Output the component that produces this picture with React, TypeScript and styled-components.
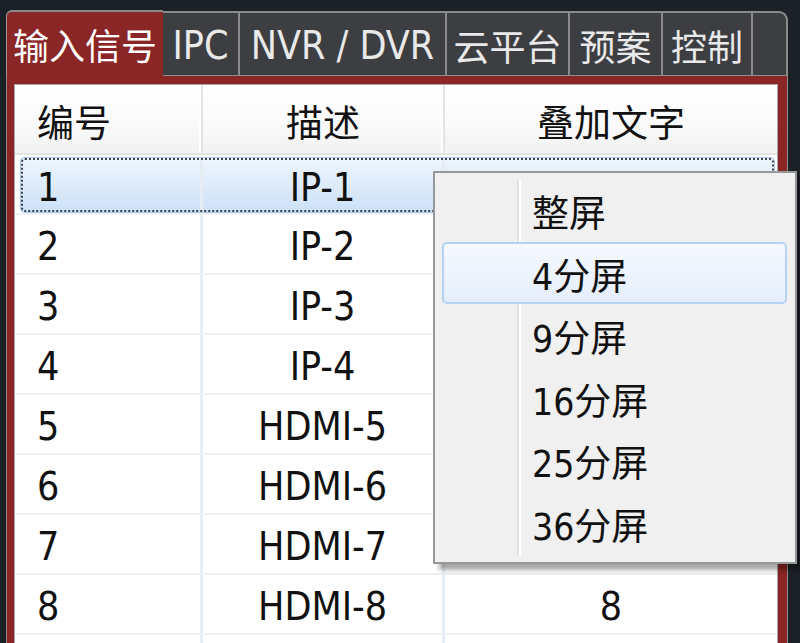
import * as React from 'react';
import styled, { createGlobalStyle, css } from 'styled-components';

const GlobalStyle = createGlobalStyle`
  html, body {
    margin: 0;
    padding: 0;
    background: #1c2128;
    overflow: hidden;
  }
`;

const latin = `"DejaVu Sans Condensed", "DejaVu Sans", "Noto Sans CJK SC", sans-serif`;

const Screen = styled.div`
  position: relative;
  width: 800px;
  height: 643px;
  overflow: hidden;
  box-sizing: border-box;
  padding: 10px 0 0 6px;
  background: #1c2128;
  font-family: ${latin};
  font-stretch: condensed;
  font-size: 37px;
  color: #111;
`;

const TabBar = styled.div`
  display: flex;
  align-items: flex-end;
  width: 782px;
  height: 65px;
`;

const Tab = styled.div<{ $active?: boolean; $width: number; $last?: boolean; $latin?: boolean }>`
  width: ${(p) => p.$width}px;
  height: 64px;
  box-sizing: border-box;
  display: flex;
  align-items: center;
  justify-content: center;
  background: #3c3e41;
  color: #e9e9e9;
  font-size: ${(p) => (p.$latin ? '39px' : '36px')};
  border-top: 2px solid #8a8a8a;
  border-right: 2px solid #8a8a8a;
  white-space: nowrap;
  padding-top: 2px;
  ${(p) =>
    p.$active &&
    css`
      position: relative;
      z-index: 1;
      height: 66px;
      margin-bottom: -1px;
      background: #8b2626;
      color: #fff;
      border-left: 1px solid #9a9a9a;
      border-right: none;
      border-top-left-radius: 6px;
      padding-top: 0;
    `}
  ${(p) =>
    p.$last &&
    css`
      border-top-right-radius: 9px;
    `}
`;

const Frame = styled.div`
  width: 782px;
  height: 580px;
  box-sizing: border-box;
  background: #8b2626;
  border: 1px solid #8d8d8d;
  border-bottom: none;
  padding: 8px 9px 0 7px;
`;

const Table = styled.div`
  height: 100%;
  background: #fff;
  border: 1px solid #a6a6a6;
  border-bottom: none;
  overflow: hidden;
`;

const Grid = styled.div`
  display: grid;
  grid-template-columns: 188px 242px 1fr;
`;

const HeaderRow = styled(Grid)`
  height: 68px;
  border-bottom: 2px solid #e4e4e4;
`;

const HeaderCell = styled.div<{ $align?: 'left' | 'center'; $last?: boolean }>`
  display: flex;
  align-items: center;
  justify-content: ${(p) => (p.$align === 'left' ? 'flex-start' : 'center')};
  padding-left: ${(p) => (p.$align === 'left' ? '22px' : '0')};
  padding-top: 4px;
  background: linear-gradient(#ffffff 0%, #fbfbfb 50%, #f1f2f3 100%);
  border-right: ${(p) => (p.$last ? 'none' : '2px solid #e3e3e3')};
  box-shadow: ${(p) => (p.$last ? 'none' : 'inset -2px 0 0 #fff')};
`;

const Row = styled(Grid)<{ $selected?: boolean }>`
  position: relative;
  height: 60px;
  border-bottom: 2px solid #eff0f1;
  box-sizing: border-box;
  ${(p) =>
    p.$selected &&
    css`
      margin-top: 2px;
      height: 58px;
      background: linear-gradient(#eef5fd, #cde1f7) no-repeat;
      background-position: 6px 1px;
      background-size: calc(100% - 9px) calc(100% - 2px);
      &::after {
        content: '';
        position: absolute;
        left: 6px;
        right: 3px;
        top: 1px;
        bottom: 1px;
        border: 2px dotted #3d4550;
        border-radius: 4px;
        box-shadow: 0 0 0 1px #a9c8ec;
        pointer-events: none;
      }
    `}
`;

const Cell = styled.div<{ $align?: 'left' | 'center'; $last?: boolean }>`
  display: flex;
  align-items: center;
  justify-content: ${(p) => (p.$align === 'left' ? 'flex-start' : 'center')};
  padding-left: ${(p) => (p.$align === 'left' ? '22px' : '0')};
  padding-top: 4px;
  font-size: 39px;
  border-right: ${(p) => (p.$last ? 'none' : '3px solid #e7edf5')};
  line-height: 1;
`;

const Menu = styled.div`
  position: absolute;
  left: 433px;
  top: 171px;
  width: 364px;
  box-sizing: border-box;
  padding: 6px 8px 8px 7px;
  background: #f0f0f0;
  border: 2px solid #979797;
  box-shadow: 6px 6px 5px rgba(0, 0, 0, 0.35);
  z-index: 5;

  &::before {
    content: '';
    position: absolute;
    left: 82px;
    top: 6px;
    bottom: 6px;
    width: 2px;
    background: #e1e1e1;
    box-shadow: 2px 0 0 #fff;
  }
`;

const MenuItem = styled.div<{ $hover?: boolean }>`
  position: relative;
  height: 62.5px;
  box-sizing: border-box;
  display: flex;
  align-items: center;
  padding-left: 88px;
  padding-top: 2px;
  border: 2px solid transparent;
  border-radius: 5px;
  ${(p) =>
    p.$hover &&
    css`
      border-color: #b3d2f4;
      background: linear-gradient(#f6f9fe, #e4eefb);
    `}
`;

const tabs = [
  { label: '输入信号', width: 157, active: true },
  { label: 'IPC', width: 77, latin: true },
  { label: 'NVR / DVR', width: 207, latin: true },
  { label: '云平台', width: 123 },
  { label: '预案', width: 93 },
  { label: '控制', width: 90 },
  { label: '', width: 35, last: true },
];

// the overlay text of rows 1-7 sits under the open menu
const rows = [
  { id: '1', desc: 'IP-1', text: '' },
  { id: '2', desc: 'IP-2', text: '' },
  { id: '3', desc: 'IP-3', text: '' },
  { id: '4', desc: 'IP-4', text: '' },
  { id: '5', desc: 'HDMI-5', text: '' },
  { id: '6', desc: 'HDMI-6', text: '' },
  { id: '7', desc: 'HDMI-7', text: '' },
  { id: '8', desc: 'HDMI-8', text: '8' },
  { id: '', desc: '', text: '' },
];

const menuItems = ['整屏', '4分屏', '9分屏', '16分屏', '25分屏', '36分屏'];

export default function App() {
  return (
    <>
      <GlobalStyle />
      <Screen>
        <TabBar>
          {tabs.map((t, i) => (
            <Tab key={i} $width={t.width} $active={t.active} $last={t.last} $latin={t.latin}>
              {t.label}
            </Tab>
          ))}
        </TabBar>
        <Frame>
          <Table>
            <HeaderRow>
              <HeaderCell $align="left">编号</HeaderCell>
              <HeaderCell>描述</HeaderCell>
              <HeaderCell $last>叠加文字</HeaderCell>
            </HeaderRow>
            {rows.map((r, i) => (
              <Row key={i} $selected={i === 0}>
                <Cell $align="left">{r.id}</Cell>
                <Cell>{r.desc}</Cell>
                <Cell $last>{r.text}</Cell>
              </Row>
            ))}
          </Table>
        </Frame>
        <Menu>
          {menuItems.map((m, i) => (
            <MenuItem key={m} $hover={i === 1}>
              {m}
            </MenuItem>
          ))}
        </Menu>
      </Screen>
    </>
  );
}
